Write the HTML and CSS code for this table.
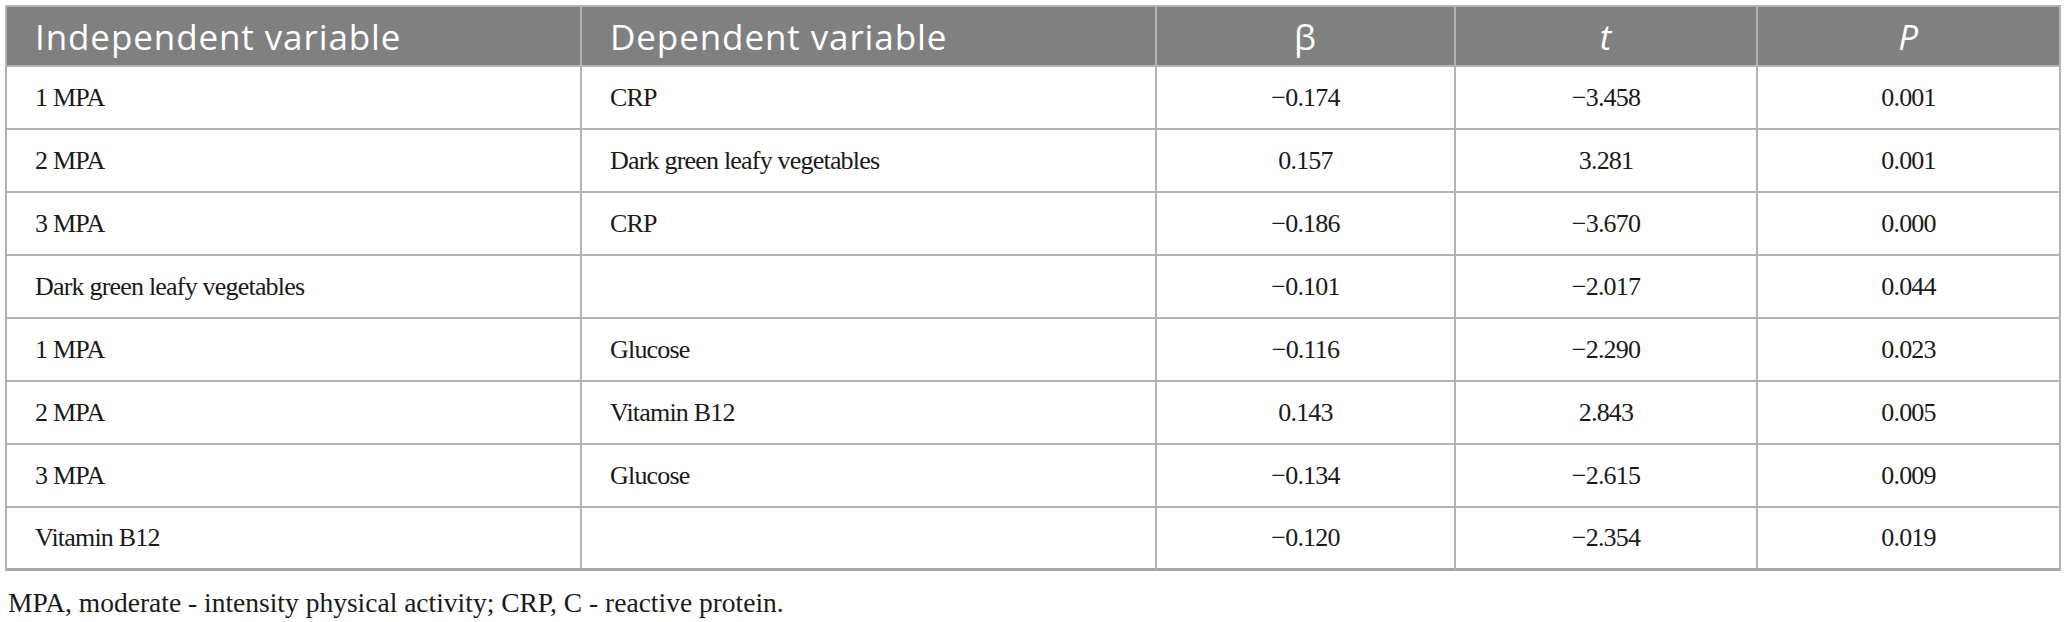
FILE: index.html
```html
<!DOCTYPE html>
<html>
<head>
<meta charset="utf-8">
<link rel="stylesheet" href="styles.css">
</head>
<body>
<div class="wrap">
<table class="tbl">
  <colgroup>
    <col class="c1"><col class="c2"><col class="c3"><col class="c4"><col class="c5">
  </colgroup>
  <thead>
    <tr>
      <th class="left">Independent variable</th>
      <th class="left">Dependent variable</th>
      <th>β</th>
      <th><i>t</i></th>
      <th><i>P</i></th>
    </tr>
  </thead>
  <tbody>
    <tr><td class="left">1 MPA</td><td class="left">CRP</td><td>−0.174</td><td>−3.458</td><td>0.001</td></tr>
    <tr><td class="left">2 MPA</td><td class="left">Dark green leafy vegetables</td><td>0.157</td><td>3.281</td><td>0.001</td></tr>
    <tr><td class="left">3 MPA</td><td class="left">CRP</td><td>−0.186</td><td>−3.670</td><td>0.000</td></tr>
    <tr><td class="left">Dark green leafy vegetables</td><td class="left"></td><td>−0.101</td><td>−2.017</td><td>0.044</td></tr>
    <tr><td class="left">1 MPA</td><td class="left">Glucose</td><td>−0.116</td><td>−2.290</td><td>0.023</td></tr>
    <tr><td class="left">2 MPA</td><td class="left">Vitamin B12</td><td>0.143</td><td>2.843</td><td>0.005</td></tr>
    <tr><td class="left">3 MPA</td><td class="left">Glucose</td><td>−0.134</td><td>−2.615</td><td>0.009</td></tr>
    <tr class="last"><td class="left">Vitamin B12</td><td class="left"></td><td>−0.120</td><td>−2.354</td><td>0.019</td></tr>
  </tbody>
</table>
<p class="note">MPA, moderate - intensity physical activity; CRP, C - reactive protein.</p>
</div>
</body>
</html>
```
FILE: styles.css
```css
html, body {
  margin: 0;
  padding: 0;
  background: #ffffff;
}
.wrap {
  padding: 5px 0 0 5px;
}
.tbl {
  border-collapse: separate;
  border-spacing: 0;
  table-layout: fixed;
  width: 2056px;
  border-top: 2px solid #b3b3b3;
  border-left: 2px solid #b3b3b3;
}
.c1 { width: 575px; }
.c2 { width: 575px; }
.c3 { width: 299px; }
.c4 { width: 302px; }
.c5 { width: 303px; }
.tbl th {
  background: #808080;
  color: #ffffff;
  font-family: "Open Sans", "Noto Sans", sans-serif;
  font-weight: 400;
  font-size: 35px;
  letter-spacing: 0.9px;
  height: 60px;
  padding: 0 28px;
  text-align: center;
  border-right: 2px solid #b3b3b3;
  border-bottom: 2px solid #b3b3b3;
  box-sizing: border-box;
  vertical-align: middle;
  line-height: 1;
}
.tbl td {
  font-family: "Liberation Serif", "Times New Roman", serif;
  font-size: 26px;
  letter-spacing: -0.8px;
  color: #1a1a1a;
  height: 63px;
  padding: 0 28px;
  text-align: center;
  border-right: 2px solid #b3b3b3;
  border-bottom: 2px solid #b3b3b3;
  box-sizing: border-box;
  vertical-align: middle;
}
.tbl th.left, .tbl td.left {
  text-align: left;
}
.tbl tr.last td {
  border-bottom: 3px solid #a6a6a6;
}
.note {
  margin: 16px 0 0 3px;
  font-family: "Liberation Serif", "Times New Roman", serif;
  font-size: 27.5px;
  color: #1a1a1a;
}
```
